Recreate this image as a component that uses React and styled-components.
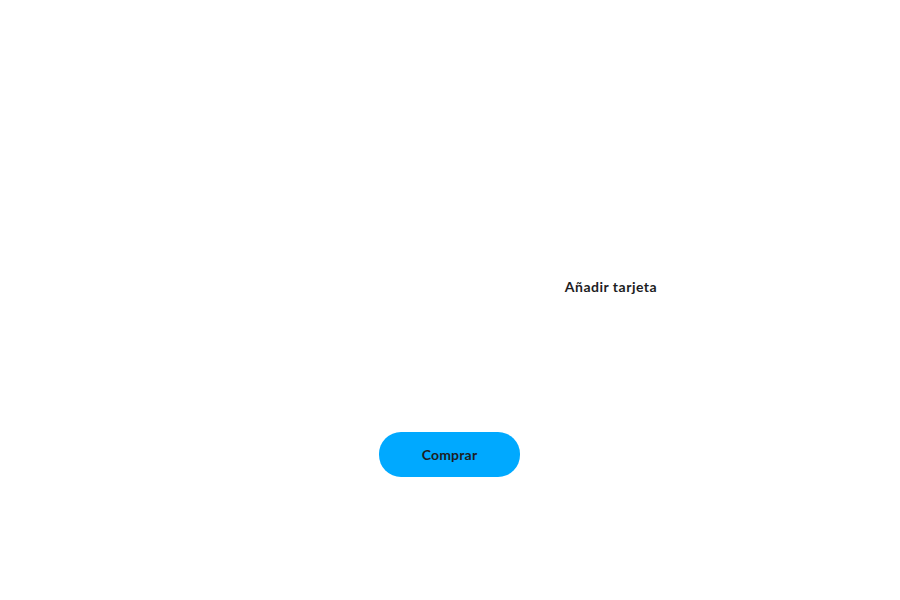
import React from "react";
import styled, { createGlobalStyle } from "styled-components";

const GlobalStyle = createGlobalStyle`
  html, body {
    margin: 0;
    padding: 0;
    background: #ffffff;
    font-family: "Lato", "DejaVu Sans", sans-serif;
  }
`;

const Page = styled.div`
  width: 900px;
  height: 600px;
  display: flex;
  flex-direction: column;
  align-items: center;
`;

const Wallet = styled.section`
  width: 644px;
  height: 415px;
  display: grid;
  grid-template-columns: 1fr 1fr;
  padding-top: 160px;
  box-sizing: border-box;
`;

const Slot = styled.div`
  display: flex;
  align-items: center;
  justify-content: center;
  height: 252px;
`;

const AddCard = styled.button`
  background: none;
  border: none;
  padding: 0;
  font-family: inherit;
  font-size: 14px;
  font-weight: 700;
  letter-spacing: 0.5px;
  color: #1d1d1f;
  cursor: pointer;
`;

const BuyButton = styled.button`
  margin-top: 17px;
  margin-right: 1px;
  width: 141px;
  height: 45px;
  border: none;
  border-radius: 22px;
  background: #00a9ff;
  color: #1d1d1f;
  font-family: inherit;
  font-size: 14px;
  font-weight: 700;
  letter-spacing: 0.2px;
  cursor: pointer;
`;

export default function App() {
  return (
    <Page>
      <GlobalStyle />
      <Wallet>
        <Slot />
        <Slot>
          <AddCard>Añadir tarjeta</AddCard>
        </Slot>
      </Wallet>
      <BuyButton>Comprar</BuyButton>
    </Page>
  );
}
